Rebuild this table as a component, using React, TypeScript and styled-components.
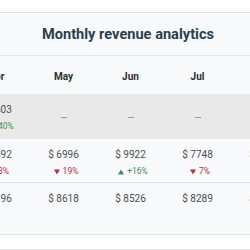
import React from "react";
import styled, { createGlobalStyle } from "styled-components";

const Global = createGlobalStyle`
  html, body { margin: 0; padding: 0; background: #ffffff; }
  body { font-family: Roboto, "Liberation Sans", Arial, sans-serif; }
`;

const Viewport = styled.div`
  width: 250px;
  height: 250px;
  overflow: hidden;
  padding-top: 12px;
  box-sizing: border-box;
  display: flex;
  flex-direction: column;
  gap: 14px;
`;

const Card = styled.section`
  flex: none;
  width: 876px;
  margin-left: -310px;
  background: #f8f9fa;
  border-top: 1px solid #dee2e6;
  border-bottom: 1px solid #dee2e6;
  padding-bottom: 7px;
`;

const NextCard = styled.section`
  flex: none;
  width: 876px;
  margin-left: -310px;
  height: 40px;
  background: #f8f9fa;
  border-top: 1px solid #dee2e6;
`;

const Title = styled.h2`
  margin: 0;
  height: 42px;
  display: flex;
  align-items: center;
  justify-content: center;
  font-size: 14.6px;
  font-weight: 700;
  color: #2c3e50;
  border-bottom: 1px solid #dee2e6;
`;

const Grid = styled.div`
  display: grid;
  grid-template-columns: 72px repeat(12, 67px);
`;

const Row = styled.div<{ $highlight?: boolean; $border?: boolean; $height: number }>`
  display: contents;
  & > * {
    height: ${(p) => p.$height}px;
    background: ${(p) => (p.$highlight ? "#e9e9e9" : "transparent")};
    border-bottom: ${(p) => (p.$border ? "1px solid #dee2e6" : "none")};
  }
`;

const HeadCell = styled.div`
  display: flex;
  align-items: center;
  justify-content: center;
  padding-top: 2px;
  box-sizing: border-box;
  font-size: 10px;
  font-weight: 700;
  color: #2b2f33;
`;

const Cell = styled.div`
  box-sizing: border-box;
  display: flex;
  flex-direction: column;
  align-items: center;
  padding-top: 10px;
  gap: 7px;
`;

const EmptyCell = styled.div`
  box-sizing: border-box;
  display: flex;
  align-items: center;
  justify-content: center;
  padding-top: 2px;
`;

const Value = styled.span`
  font-size: 10px;
  line-height: 11px;
  color: #4a4f55;
`;

const Dash = styled.span`
  display: block;
  width: 6px;
  height: 1px;
  background: #9a9a9a;
`;

const Change = styled.span<{ $up: boolean }>`
  font-size: 8.5px;
  line-height: 9px;
  padding-left: 5px;
  color: ${(p) => (p.$up ? "#4a8a5a" : "#b5333b")};
  display: flex;
  align-items: center;
  gap: 3px;
`;

const Arrow = styled.svg`
  width: 6px;
  height: 6px;
  fill: currentColor;
`;

const months = ["Jan", "Feb", "Mar", "Apr", "May", "Jun", "Jul", "Aug", "Sep", "Oct", "Nov", "Dec"];

type C = { v?: string; c?: string; up?: boolean } | null;

const row1: C[] = [
  { v: "$ 5210" }, { v: "$ 6180", c: "+19%", up: true }, { v: "$ 5430", c: "12%", up: false },
  { v: "$ 7603", c: "+40%", up: true }, null, null, null, null, null, null, null, null,
];
const row2: C[] = [
  { v: "$ 8120" }, { v: "$ 7345", c: "10%", up: false }, { v: "$ 8950", c: "+22%", up: true },
  { v: "$ 8692", c: "3%", up: false }, { v: "$ 6996", c: "19%", up: false }, { v: "$ 9922", c: "+16%", up: true },
  { v: "$ 7748", c: "7%", up: false }, { v: "$ 8134", c: "+5%", up: true }, { v: "$ 7520", c: "8%", up: false },
  { v: "$ 8870", c: "+18%", up: true }, { v: "$ 9105", c: "+3%", up: true }, { v: "$ 9640", c: "+6%", up: true },
];
const row3: C[] = [
  { v: "$ 7412" }, { v: "$ 7980" }, { v: "$ 8233" }, { v: "$ 8196" }, { v: "$ 8618" }, { v: "$ 8526" },
  { v: "$ 8289" }, { v: "$ 8402" }, { v: "$ 8077" }, { v: "$ 8561" }, { v: "$ 8723" }, { v: "$ 8915" },
];

const Up = () => (
  <Arrow viewBox="0 0 6 6"><polygon points="3,0.5 6,5.5 0,5.5" /></Arrow>
);
const Down = () => (
  <Arrow viewBox="0 0 6 6"><polygon points="0,0.5 6,0.5 3,5.5" /></Arrow>
);

const renderCell = (c: C, i: number) =>
  c ? (
    <Cell key={i}>
      <Value>{c.v}</Value>
      {c.c && (
        <Change $up={!!c.up}>
          {c.up ? <Up /> : <Down />}
          {c.c}
        </Change>
      )}
    </Cell>
  ) : (
    <EmptyCell key={i}><Dash /></EmptyCell>
  );

export default function App() {
  return (
    <>
      <Global />
      <Viewport>
        <Card>
          <Title>Monthly revenue analytics</Title>
          <Grid>
            <Row $height={38}>
              <HeadCell />
              {months.map((m) => <HeadCell key={m}>{m}</HeadCell>)}
            </Row>
            <Row $highlight $height={45}>
              <Cell />
              {row1.map(renderCell)}
            </Row>
            <Row $border $height={44}>
              <Cell />
              {row2.map(renderCell)}
            </Row>
            <Row $height={44}>
              <Cell />
              {row3.map(renderCell)}
            </Row>
          </Grid>
        </Card>
        <NextCard />
      </Viewport>
    </>
  );
}
